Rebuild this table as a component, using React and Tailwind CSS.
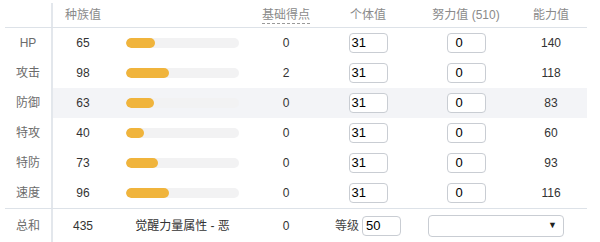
import React from "react";

const stats = [
  { label: "HP", base: 65, ev: 0, total: 140 },
  { label: "攻击", base: 98, ev: 2, total: 118 },
  { label: "防御", base: 63, ev: 0, total: 83, hl: true },
  { label: "特攻", base: 40, ev: 0, total: 60 },
  { label: "特防", base: 73, ev: 0, total: 93 },
  { label: "速度", base: 96, ev: 0, total: 116 },
];

const font = { fontFamily: '"Liberation Sans", "Noto Sans CJK SC", sans-serif' };

function Input({ value, w = "w-[39px]", pl = "pl-[2px]" }) {
  return (
    <div
      className={`${w} ${pl} h-[20px] border border-[#c9cdd3] rounded-[4px] bg-white flex items-center text-[13px] text-black`}
    >
      {value}
    </div>
  );
}

export default function App() {
  return (
    <div className="w-[600px] h-[242px] bg-white overflow-hidden text-[12px]" style={font}>
      <div className="ml-[5px] w-[582px] pt-[3px]">
        {/* header */}
        <div className="flex h-[25px] border-b border-[#dde2e8] text-[#8a8a8a]">
          <div className="w-[48px] border-r-2 border-[#e3e7ec]"></div>
          <div className="w-[60px] flex items-center justify-center">种族值</div>
          <div className="w-[139px]"></div>
          <div className="w-[68px] flex items-center justify-center">
            <span className="border-b border-dashed border-[#9a9a9a] leading-[14px] pb-[1px] mt-[2px]">基础得点</span>
          </div>
          <div className="w-[96px] flex items-center justify-center">个体值</div>
          <div className="w-[100px] flex items-center justify-center">努力值 (510)</div>
          <div className="w-[70px] flex items-center justify-center">能力值</div>
        </div>
        {stats.map((s) => (
          <div key={s.label} className={`flex h-[30px] ${s.hl ? "bg-[#f3f4f7]" : ""}`}>
            <div className="w-[48px] border-r-2 border-[#e3e7ec] bg-white flex items-center justify-center text-[#6b6b6b]">
              {s.label}
            </div>
            <div className="w-[60px] flex items-center justify-center text-[#333]">{s.base}</div>
            <div className="w-[139px] flex items-center pl-[13px]">
              <div className="w-[113px] h-[10px] rounded-full bg-[#f2f2f3] overflow-hidden">
                <div
                  className="h-full rounded-full bg-[#f0b43c]"
                  style={{ width: `${(s.base / 255) * 113}px` }}
                ></div>
              </div>
            </div>
            <div className="w-[68px] flex items-center justify-center text-[#333]">{s.ev}</div>
            <div className="w-[96px] flex items-center justify-center">
              <Input value="31" />
            </div>
            <div className="w-[100px] flex items-center justify-center">
              <Input value="0" pl="pl-[8px]" />
            </div>
            <div className="w-[70px] flex items-center justify-center text-[#333]">{s.total}</div>
          </div>
        ))}
        {/* footer */}
        <div className="flex h-[34px] border-t border-[#dde2e8]">
          <div className="w-[48px] border-r-2 border-[#e3e7ec] flex items-center justify-center text-[#6b6b6b]">
            总和
          </div>
          <div className="w-[60px] flex items-center justify-center text-[#333]">435</div>
          <div className="w-[139px] flex items-center justify-center text-[#333]">觉醒力量属性 - 恶</div>
          <div className="w-[68px] flex items-center justify-center text-[#333]">0</div>
          <div className="w-[96px] flex items-center justify-center gap-[3px] text-[#444]">
            <span>等级</span>
            <Input value="50" pl="pl-[3px]" />
          </div>
          <div className="w-[170px] flex items-center pl-[12px]">
            <div className="w-[136px] h-[22px] border border-[#c9cdd3] rounded-[4px] bg-white flex items-center justify-end pr-[6px]">
              <span className="text-[9px] text-[#222] leading-none">▼</span>
            </div>
          </div>
        </div>
      </div>
    </div>
  );
}
